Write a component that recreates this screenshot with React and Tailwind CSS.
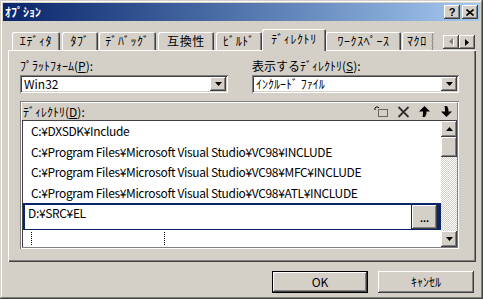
import React from 'react';

const raised =
  'shadow-[inset_-1px_-1px_#404040,inset_1px_1px_#ffffff,inset_-2px_-2px_#808080,inset_2px_2px_#d4d0c8]';
const sunken =
  'shadow-[inset_1px_1px_#808080,inset_-1px_-1px_#ffffff,inset_2px_2px_#404040,inset_-2px_-2px_#d4d0c8]';

const tabs = [
  { label: 'ｴﾃﾞｨﾀ', cls: 'ml-[4px] w-[48px]' },
  { label: 'ﾀﾌﾞ', cls: 'ml-[2px] w-[36px]' },
  { label: 'ﾃﾞﾊﾞｯｸﾞ', cls: 'ml-[1px] w-[57px]' },
  { label: '互換性', cls: 'ml-[2px] w-[56px]' },
  { label: 'ﾋﾞﾙﾄﾞ', cls: 'ml-[2px] w-[46px]' },
  { label: 'ﾃﾞｨﾚｸﾄﾘ', cls: 'w-[64px]', active: true },
  { label: 'ﾜｰｸｽﾍﾟｰｽ', cls: 'w-[75px]' },
];

const dirs = [
  'C:¥DXSDK¥Include',
  'C:¥Program Files¥Microsoft Visual Studio¥VC98¥INCLUDE',
  'C:¥Program Files¥Microsoft Visual Studio¥VC98¥MFC¥INCLUDE',
  'C:¥Program Files¥Microsoft Visual Studio¥VC98¥ATL¥INCLUDE',
];

function Tri({ dir = 'down', color = '#000' }) {
  // small solid triangles used on combo / scroll buttons
  const d = {
    down: 'M0 0h7l-3.5 4z',
    up: 'M0 4h7l-3.5-4z',
    left: 'M4 0v7l-4-3.5z',
    right: 'M0 0v7l4-3.5z',
  }[dir];
  const horiz = dir === 'left' || dir === 'right';
  return (
    <svg width={horiz ? 4 : 7} height={horiz ? 7 : 4} viewBox={horiz ? '0 0 4 7' : '0 0 7 4'}>
      <path d={d} fill={color} />
    </svg>
  );
}

function Combo({ value }) {
  return (
    <div className={`mt-[3px] h-[18px] bg-white flex items-center ${sunken}`}>
      <span className="flex-1 pl-[4px] leading-[12px]">{value}</span>
      <div className={`w-[16px] h-[14px] mr-[2px] bg-[#d4d0c8] flex items-center justify-center ${raised}`}>
        <Tri />
      </div>
    </div>
  );
}

function Toolbar() {
  return (
    <div className="flex items-center">
      <svg width="15" height="12" viewBox="0 0 15 12" className="mr-[8px]">
        <rect x="4.5" y="3.5" width="9" height="7" fill="none" stroke="#000" strokeDasharray="1 1" />
        <path d="M3 0v2M0 3h2M1 1l1 1M5 1l-1 1" stroke="#000" strokeWidth="1" />
      </svg>
      <svg width="13" height="12" viewBox="0 0 13 12" className="mr-[9px]">
        <path d="M1.5 1l10 10M11.5 1l-10 10" stroke="#303030" strokeWidth="1.8" />
      </svg>
      <svg width="11" height="11" viewBox="0 0 11 11" className="mr-[11px]">
        <path d="M5.5 0L11 5.5H7.5C7.5 8 7 9.5 6 11H3.5C4 9.5 4 8 4 5.5H0z" fill="#000" />
      </svg>
      <svg width="11" height="11" viewBox="0 0 11 11">
        <path d="M5.5 11L11 5.5H7.5C7.5 3 7 1.5 6 0H3.5C4 1.5 4 3 4 5.5H0z" fill="#000" />
      </svg>
    </div>
  );
}

export default function App() {
  return (
    <div
      className={`w-[483px] h-[299px] bg-[#d4d0c8] p-[3px] flex flex-col text-[12px] leading-none text-black font-['Noto_Sans_CJK_JP','Liberation_Sans',sans-serif] shadow-[inset_-1px_-1px_#404040,inset_1px_1px_#d4d0c8,inset_-2px_-2px_#808080,inset_2px_2px_#ffffff]`}
    >
      {/* title bar */}
      <div className="h-[18px] flex items-center bg-linear-to-r from-[#0a246a] to-[#a6caf0] pl-[2px] pr-[2px]">
        <span className="flex-1 text-white font-bold leading-[12px]">ｵﾌﾟｼｮﾝ</span>
        <div className={`w-[16px] h-[14px] bg-[#d4d0c8] flex items-center justify-center font-bold text-[11px] font-['Liberation_Sans',sans-serif] ${raised}`}>
          ?
        </div>
        <div className={`ml-[2px] w-[16px] h-[14px] bg-[#d4d0c8] flex items-center justify-center ${raised}`}>
          <svg width="8" height="7" viewBox="0 0 8 7">
            <path d="M0.5 0.5l7 6M7.5 0.5l-7 6" stroke="#000" strokeWidth="1.6" />
          </svg>
        </div>
      </div>

      <div className="flex-1 flex flex-col pl-[5px] pt-[8px]">
        {/* tab strip */}
        <div className="w-[468px] h-[21px] flex items-end tracking-[0.6px]">
          {tabs.map((t) => (
            <div
              key={t.label}
              className={`${t.cls} flex items-center justify-center rounded-t-[2px] bg-[#d4d0c8] shadow-[inset_1px_1px_#ffffff,inset_-1px_0_#404040,inset_-2px_0_#808080] ${
                t.active ? 'h-[22px] -mb-[1px] relative z-10 pb-[2px]' : 'h-[18px]'
              }`}
            >
              {t.label}
            </div>
          ))}
          <div className="ml-[1px] w-[32px] h-[18px] flex items-center pl-[5px] rounded-tl-[2px] shadow-[inset_1px_1px_#ffffff] overflow-hidden">
            <span className="flex-1">ﾏｸﾛ</span>
            <svg width="3" height="17" viewBox="0 0 3 17">
              <path d="M1 0l1 2-1 2 1 2-1 2 1 2-1 2 1 2-1 2 1 1" stroke="#808080" fill="none" />
            </svg>
          </div>
          <div className="ml-[9px] self-start mt-[6px] flex">
            <div className={`w-[16px] h-[14px] flex items-center justify-center ${raised}`}>
              <svg width="5" height="8" viewBox="0 0 5 8">
                <path d="M5 1v7l-4-3.5z" fill="#ffffff" />
                <path d="M4 0v7l-4-3.5z" fill="#808080" />
              </svg>
            </div>
            <div className={`w-[16px] h-[14px] flex items-center justify-center ${raised}`}>
              <Tri dir="right" />
            </div>
          </div>
        </div>

        {/* tab page */}
        <div className="w-[468px] h-[212px] flex flex-col pt-[10px] pl-[12px] pr-[17px] shadow-[inset_1px_1px_#ffffff,inset_-1px_-1px_#404040,inset_-2px_-2px_#808080]">
          <div className="flex gap-[24px]">
            <div className="w-[208px]">
              <div className="h-[12px] leading-[12px]">
                ﾌﾟﾗｯﾄﾌｫｰﾑ(<span className="underline">P</span>):
              </div>
              <Combo value="Win32" />
            </div>
            <div className="w-[207px]">
              <div className="h-[12px] leading-[12px]">
                表示するﾃﾞｨﾚｸﾄﾘ(<span className="underline">S</span>):
              </div>
              <Combo value="ｲﾝｸﾙｰﾄﾞ ﾌｧｲﾙ" />
            </div>
          </div>

          {/* directory frame */}
          <div className="mt-[8px] h-[148px] flex flex-col p-[2px] shadow-[inset_1px_1px_#808080,inset_-1px_-1px_#ffffff,inset_2px_2px_#ffffff,inset_-2px_-2px_#808080]">
            <div className="h-[17px] flex items-center justify-between pl-[1px] pr-[5px]">
              <span className="leading-[12px]">
                ﾃﾞｨﾚｸﾄﾘ(<span className="underline">D</span>):
              </span>
              <Toolbar />
            </div>
            <div className="flex-1 flex bg-white pl-[1px] pt-[1px] shadow-[inset_1px_1px_#404040]">
              <div className="flex-1 flex flex-col">
                {dirs.map((d) => (
                  <div key={d} className="h-[20.5px] flex items-center pl-[8px] whitespace-nowrap tracking-[-0.35px]">
                    {d}
                  </div>
                ))}
                <div className="h-[27px] flex bg-[#0a246a] pl-[2px] pt-[2px] pb-[1px] pr-[4px] gap-[1px]">
                  <div className="flex-1 bg-white pl-[3px] pt-[2px] leading-[12px] tracking-[-0.35px]">D:¥SRC¥EL</div>
                  <div className={`w-[25px] bg-[#d4d0c8] flex items-end justify-center pb-[5px] font-bold text-[11px] font-['Liberation_Sans',sans-serif] ${raised}`}>
                    ...
                  </div>
                </div>
                <div className="flex-1 flex items-start pt-[2px] pl-[8px]">
                  <span className="h-[13px] border-l border-dotted border-black" />
                  <span className="ml-[132px] h-[13px] border-l border-dotted border-black" />
                </div>
              </div>
              {/* scrollbar */}
              <div className="w-[16px] flex flex-col">
                <div className={`h-[16px] bg-[#d4d0c8] flex items-center justify-center ${raised}`}>
                  <Tri dir="up" />
                </div>
                <div className={`h-[20px] bg-[#d4d0c8] ${raised}`} />
                <div className="flex-1 bg-[repeating-conic-gradient(#d4d0c8_0_25%,#ffffff_0_50%)] bg-[length:2px_2px]" />
                <div className={`h-[16px] bg-[#d4d0c8] flex items-center justify-center ${raised}`}>
                  <Tri dir="down" />
                </div>
              </div>
            </div>
          </div>
        </div>

        {/* buttons */}
        <div className="w-[468px] mt-[9px] flex justify-end gap-[10px] pr-[2px]">
          <div className="w-[96px] h-[22px] border border-black">
            <div className={`h-full flex items-center justify-center ${raised}`}>OK</div>
          </div>
          <div className={`w-[96px] h-[22px] flex items-center justify-center ${raised}`}>ｷｬﾝｾﾙ</div>
        </div>
      </div>
    </div>
  );
}
